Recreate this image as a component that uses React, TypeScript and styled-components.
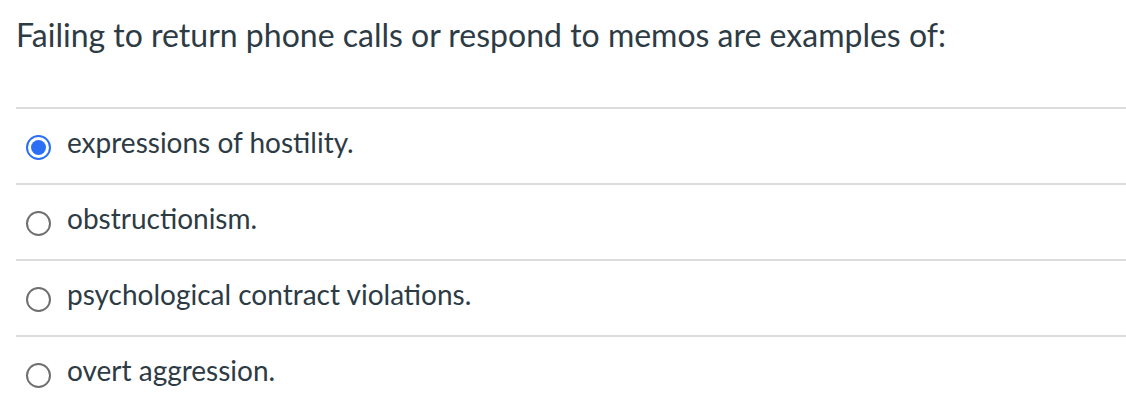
import React from 'react';
import styled, { createGlobalStyle } from 'styled-components';

const GlobalStyle = createGlobalStyle`
  body {
    margin: 0;
    background: #fff;
    font-family: Lato, "Noto Sans", sans-serif;
    color: #2d3b45;
  }
`;

const Wrap = styled.div`
  padding: 0 0 0 16px;
  width: 1126px;
  box-sizing: border-box;
`;

const Question = styled.div`
  font-size: 32px;
  line-height: 38px;
  padding: 16px 0 53px;
  border-bottom: 2px solid #dcdcdc;
`;

const Option = styled.label<{ last?: boolean }>`
  display: flex;
  align-items: center;
  gap: 16px;
  height: 74px;
  padding-left: 10px;
  border-bottom: ${p => (p.last ? 'none' : '2px solid #dcdcdc')};
`;

const OptionText = styled.span`
  font-size: 28px;
  line-height: 28px;
  margin-bottom: 8px;
`;

const Radio = styled.span<{ checked?: boolean }>`
  width: 21px;
  height: 21px;
  margin-top: 3px;
  border-radius: 50%;
  border: 2px solid ${p => (p.checked ? '#2b6ff5' : '#6f6f6f')};
  display: flex;
  align-items: center;
  justify-content: center;
  flex-shrink: 0;
  &::after {
    content: '';
    display: ${p => (p.checked ? 'block' : 'none')};
    width: 15px;
    height: 15px;
    border-radius: 50%;
    background: #2b6ff5;
  }
`;

const options = [
  'expressions of hostility.',
  'obstructionism.',
  'psychological contract violations.',
  'overt aggression.',
];

export default function App() {
  return (
    <Wrap>
      <GlobalStyle />
      <Question>Failing to return phone calls or respond to memos are examples of:</Question>
      {options.map((o, i) => (
        <Option key={o} last={i === options.length - 1}>
          <Radio checked={i === 0} />
          <OptionText>{o}</OptionText>
        </Option>
      ))}
    </Wrap>
  );
}
